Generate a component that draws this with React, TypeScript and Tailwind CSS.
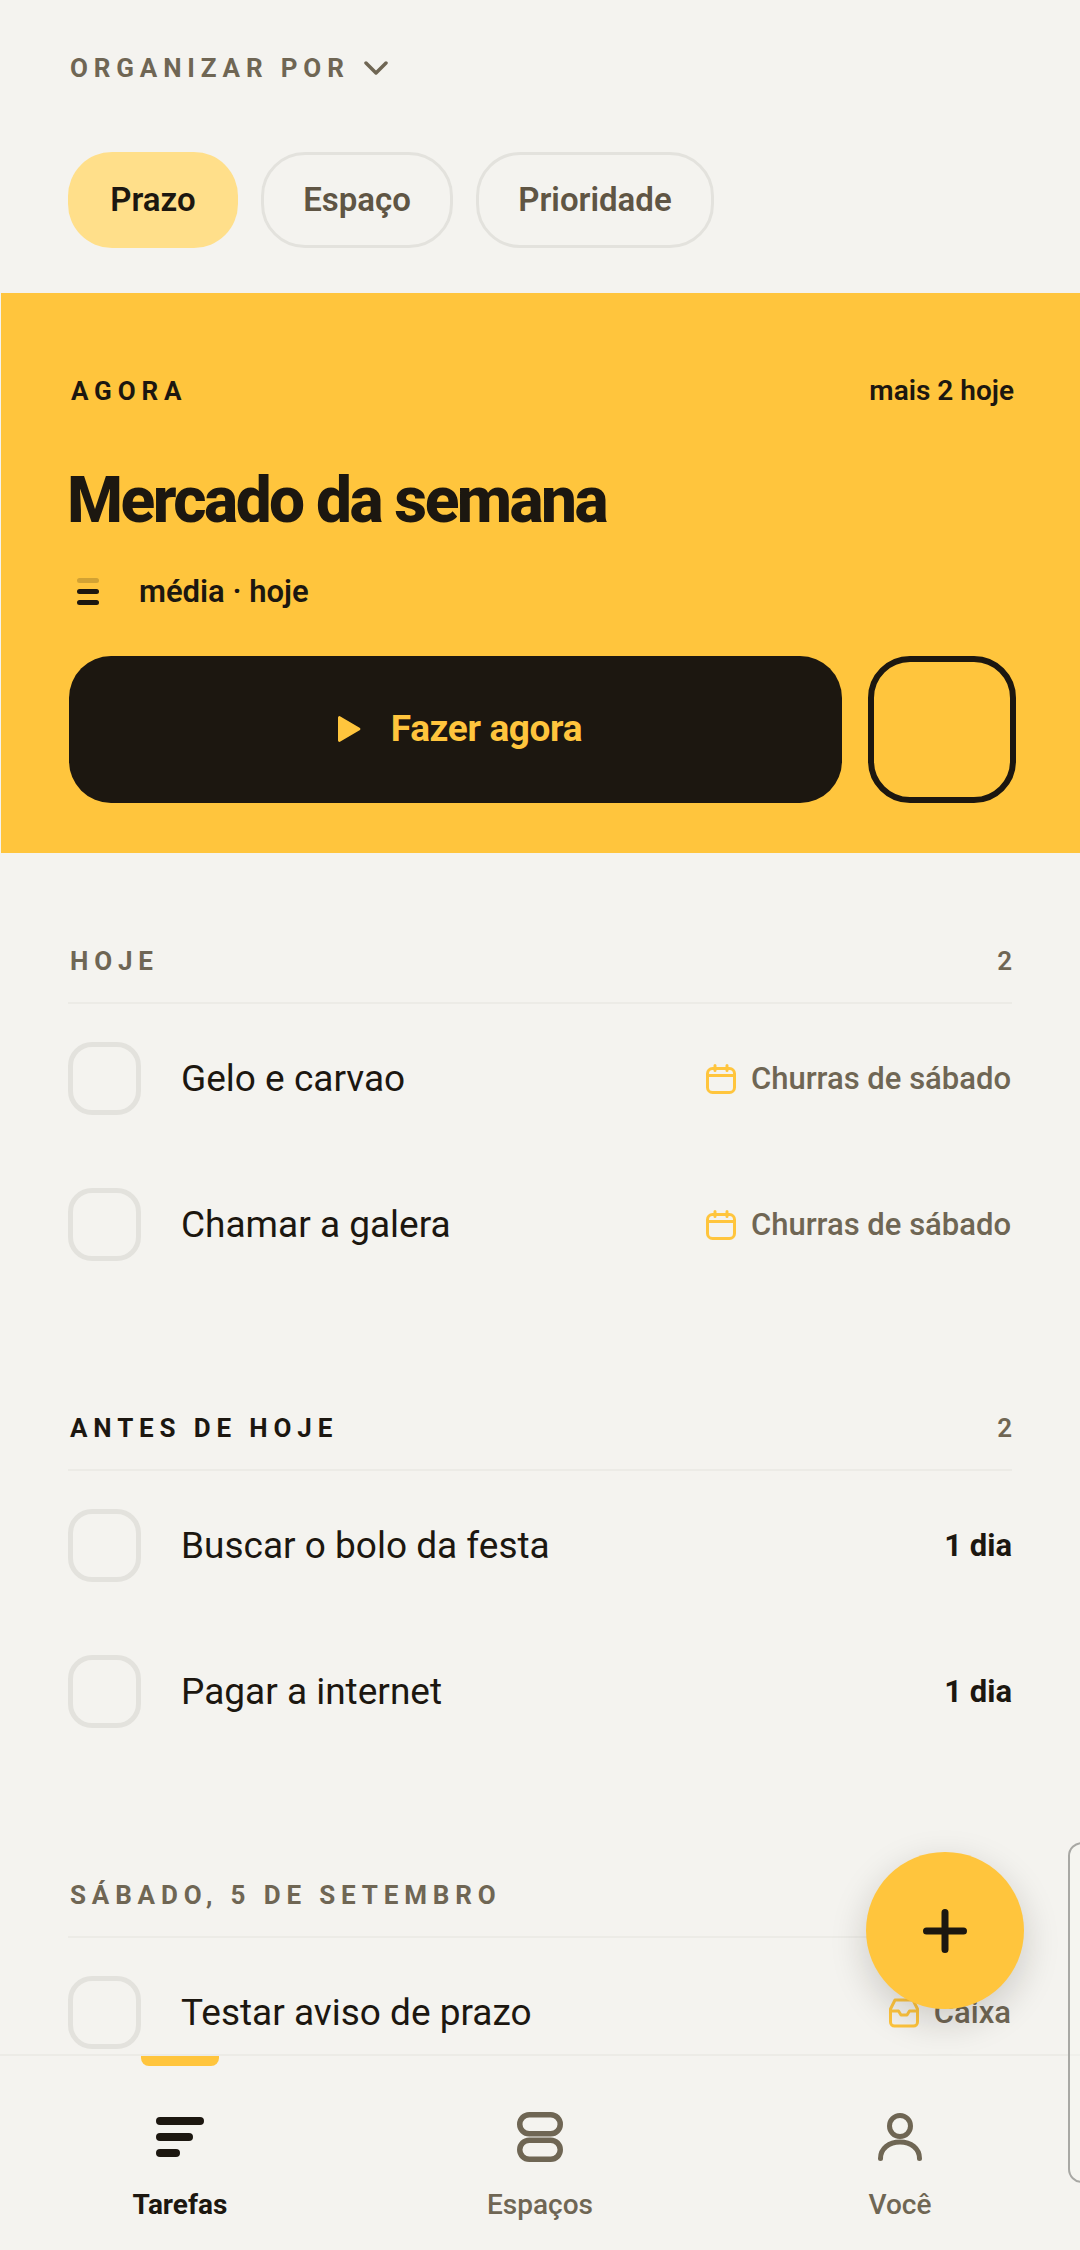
import React from 'react';

const tasksToday = ['Gelo e carvao', 'Chamar a galera'];
const tasksBefore = ['Buscar o bolo da festa', 'Pagar a internet'];

function CalendarIcon() {
  return (
    <svg width="30" height="30" viewBox="0 0 30 30" fill="none" stroke="#FFC53D" strokeWidth="3" strokeLinecap="round" strokeLinejoin="round">
      <rect x="1.5" y="4.5" width="27" height="24" rx="5" />
      <path d="M1.5 11.5h27M9 1.5v5M21 1.5v5" />
    </svg>
  );
}

function InboxIcon() {
  return (
    <svg width="30" height="30" viewBox="0 0 30 30" fill="none" stroke="#FFC53D" strokeWidth="3" strokeLinecap="round" strokeLinejoin="round">
      <path d="M6 2h18l4.500 9v13a4 4 0 0 1-4 4h-19a4 4 0 0 1-4-4V11z" />
      <path d="M1.500 13h8l2.500 4h6l2.500-4h8" />
    </svg>
  );
}

function TaskRow({ title, right }: { title: string; right: React.ReactNode }) {
  return (
    <div className="flex h-[146px] items-center">
      <div className="h-[73px] w-[73px] shrink-0 rounded-[24px] border-[5px] border-[#E3E2DD]" />
      <div className="ml-[40px] flex-1 pt-[2px] text-[37px] font-[450] text-[#1C1710]">{title}</div>
      {right}
    </div>
  );
}

function SpaceLabel({ name }: { name: string }) {
  return (
    <div className="flex items-center gap-[15px] pr-px pt-[2px] text-[31px] font-medium text-[#6F6654]">
      <CalendarIcon />
      <span>{name}</span>
    </div>
  );
}

function DaysLabel() {
  return <div className="pt-[2px] text-[31px] font-bold text-[#1C1710]">1 dia</div>;
}

function SectionHeader({ title, count, dark }: { title: string; count?: string; dark?: boolean }) {
  return (
    <div className="flex h-[62px] items-start justify-between border-b-2 border-[#ECEBE6] pl-[2px]">
      <span className={`text-[26px] font-bold tracking-[0.225em] ${dark ? 'text-[#1C1710]' : 'text-[#6F6654]'}`}>{title}</span>
      {count && <span className="text-[26px] font-semibold text-[#6F6654]">{count}</span>}
    </div>
  );
}

function NavItem({ label, active, children }: { label: string; active?: boolean; children: React.ReactNode }) {
  return (
    <div className="relative flex flex-1 flex-col items-center pt-[56px]">
      {active && <div className="absolute left-[141px] top-0 h-[10px] w-[78px] rounded-b-[8px] bg-[#FFC53D]" />}
      <div className="flex h-[50px] w-[50px] items-center justify-center">{children}</div>
      <span className={`mt-[22px] text-[28px] ${active ? 'font-bold text-[#1C1710]' : 'font-medium text-[#6F6654]'}`}>{label}</span>
    </div>
  );
}

export default function App() {
  return (
    <div className="relative flex h-[2250px] w-[1080px] flex-col overflow-hidden bg-[#F4F3EF] font-['Roboto',sans-serif]">
      <div className="flex-1 overflow-hidden">
        <div className="flex items-center gap-[14px] pl-[70px] pt-[52px]">
          <span className="text-[26px] font-bold leading-[32px] tracking-[0.225em] text-[#6F6654]">ORGANIZAR POR</span>
          <svg width="24" height="16" viewBox="0 0 24 16" fill="none" stroke="#6F6654" strokeWidth="3.500" strokeLinecap="round" strokeLinejoin="round">
            <path d="M2 3l10 10L22 3" />
          </svg>
        </div>

        <div className="mt-[68px] flex gap-[23px] pl-[68px]">
          <div className="flex h-[96px] w-[170px] items-center justify-center rounded-[44px] bg-[#FFDF8A] text-[33px] font-semibold text-[#1C1710]">Prazo</div>
          <div className="flex h-[96px] w-[192px] items-center justify-center rounded-[44px] border-[3px] border-[#E3E2DD] text-[33px] font-semibold text-[#5F5544]">Espaço</div>
          <div className="flex h-[96px] w-[238px] items-center justify-center rounded-[44px] border-[3px] border-[#E3E2DD] text-[33px] font-semibold text-[#5F5544]">Prioridade</div>
        </div>

        <div className="ml-px mt-[45px] h-[560px] bg-[#FFC53D] pl-[68px] pr-[64px] pt-[83px]">
          <div className="flex items-center justify-between">
            <span className="pl-[2px] text-[26px] font-bold leading-[30px] tracking-[0.225em] text-[#1C1710]">AGORA</span>
            <span className="pr-[2px] text-[28px] font-semibold leading-[30px] text-[#1C1710]">mais 2 hoje</span>
          </div>
          <div className="-ml-[2px] mt-[59px] text-[64px] font-extrabold leading-[72px] tracking-[-0.04em] text-[#1C1710]">Mercado da semana</div>
          <div className="mt-[32px] flex items-center">
            <svg width="24" height="30" viewBox="0 0 24 30" className="ml-[7px]">
              <rect x="1" y="1" width="22" height="5" rx="2.500" fill="#1C1710" fillOpacity="0.2" />
              <rect x="1" y="12" width="22" height="5" rx="2.500" fill="#1C1710" />
              <rect x="1" y="23" width="22" height="5" rx="2.500" fill="#1C1710" />
            </svg>
            <span className="ml-[39px] text-[31px] font-semibold text-[#1C1710]">média · hoje</span>
          </div>
          <div className="mt-[40px] flex gap-[26px]">
            <div className="flex h-[147px] flex-1 items-center justify-center gap-[30px] rounded-[42px] bg-[#1C1710] pl-[8px]">
              <svg width="24" height="28" viewBox="0 0 24 28">
                <path d="M1 2.500v23a1.500 1.500 0 0 0 2.400 1.100L23 15a1.500 1.500 0 0 0 0-2L3.400 1.400A1.500 1.500 0 0 0 1 2.500z" fill="#FFC53D" />
              </svg>
              <span className="text-[37px] font-bold tracking-[-0.01em] text-[#FFC53D]">Fazer agora</span>
            </div>
            <div className="h-[147px] w-[148px] rounded-[42px] border-[6px] border-[#1C1710]" />
          </div>
        </div>

        <div className="mx-[68px] mt-[89px]">
          <SectionHeader title="HOJE" count="2" />
          <div className="pt-[1px]">
            {tasksToday.map((t) => (
              <TaskRow key={t} title={t} right={<SpaceLabel name="Churras de sábado" />} />
            ))}
          </div>

          <div className="mt-[112px]">
            <SectionHeader title="ANTES DE HOJE" count="2" dark />
            <div className="pt-[1px]">
              {tasksBefore.map((t) => (
                <TaskRow key={t} title={t} right={<DaysLabel />} />
              ))}
            </div>
          </div>

          <div className="mt-[112px]">
            <SectionHeader title="SÁBADO, 5 DE SETEMBRO" />
            <div className="pt-[1px]">
              <TaskRow
                title="Testar aviso de prazo"
                right={
                  <div className="flex items-center gap-[15px] pr-px pt-[2px] text-[31px] font-medium text-[#6F6654]">
                    <InboxIcon />
                    <span>Caixa</span>
                  </div>
                }
              />
            </div>
          </div>
        </div>
      </div>

      <div className="flex h-[196px] shrink-0 border-t-2 border-[#ECEBE6] bg-[#F4F3EF]">
        <NavItem label="Tarefas" active>
          <svg width="48" height="40" viewBox="0 0 48 40">
            <rect x="0" y="0" width="48" height="8" rx="4" fill="#1C1710" />
            <rect x="0" y="16" width="37" height="8" rx="4" fill="#1C1710" />
            <rect x="0" y="32" width="24" height="8" rx="4" fill="#1C1710" />
          </svg>
        </NavItem>
        <NavItem label="Espaços">
          <svg width="46" height="50" viewBox="0 0 46 50" fill="none" stroke="#6F6654" strokeWidth="5.500">
            <rect x="2.750" y="2.750" width="40.500" height="19" rx="9.500" />
            <rect x="2.750" y="28.250" width="40.500" height="19" rx="9.500" />
          </svg>
        </NavItem>
        <NavItem label="Você">
          <svg width="44" height="48" viewBox="0 0 44 48" fill="none" stroke="#6F6654" strokeWidth="5" strokeLinecap="round">
            <circle cx="22" cy="13" r="10.500" />
            <path d="M2.500 45.500c0-10 8.500-16.500 19.500-16.500s19.500 6.500 19.500 16.500" />
          </svg>
        </NavItem>
      </div>

      <div className="absolute left-[866px] top-[1852px] flex h-[157px] w-[158px] items-center justify-center rounded-full bg-[#FFC53D] shadow-[0_12px_36px_rgba(28,23,16,0.18)]">
        <svg width="44" height="44" viewBox="0 0 44 44" fill="none" stroke="#1C1710" strokeWidth="7" strokeLinecap="round">
          <path d="M22 3.500v37M3.500 22h37" />
        </svg>
      </div>

      <div className="absolute left-[1068px] top-[1842px] h-[341px] w-[30px] rounded-[14px] border-2 border-[#A8A8A4] bg-[#F7F7F3]/40" />
    </div>
  );
}
